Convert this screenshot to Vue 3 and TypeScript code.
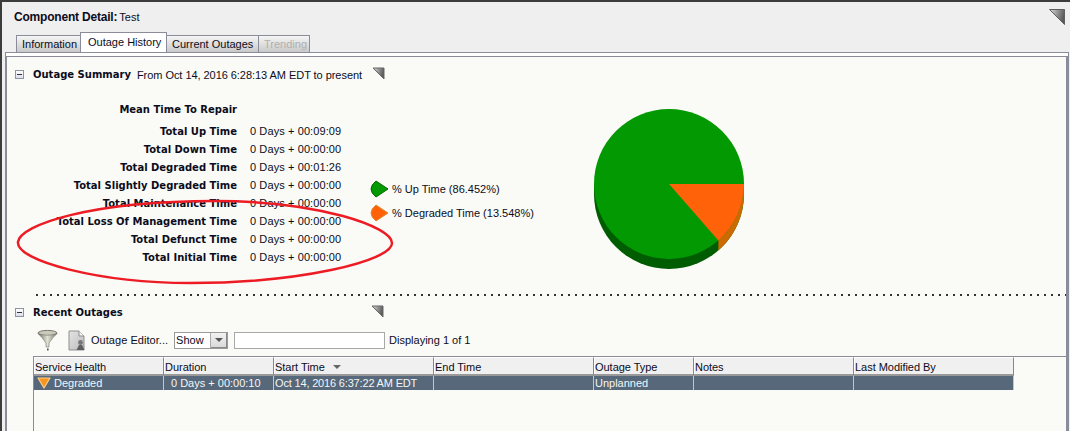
<script setup lang="ts">
const tabs = [
  { label: 'Information', cls: 'first' },
  { label: 'Outage History', cls: 'active' },
  { label: 'Current Outages', cls: '' },
  { label: 'Trending', cls: 'disabled' },
]
const stats = [
  ['Total Up Time', '0 Days + 00:09:09'],
  ['Total Down Time', '0 Days + 00:00:00'],
  ['Total Degraded Time', '0 Days + 00:01:26'],
  ['Total Slightly Degraded Time', '0 Days + 00:00:00'],
  ['Total Maintenance Time', '0 Days + 00:00:00'],
  ['Total Loss Of Management Time', '0 Days + 00:00:00'],
  ['Total Defunct Time', '0 Days + 00:00:00'],
  ['Total Initial Time', '0 Days + 00:00:00'],
]
const cols = ['Service Health', 'Duration', 'Start Time', 'End Time', 'Outage Type', 'Notes', 'Last Modified By']
</script>

<template>
  <div class="page">
    <div class="title-row">
      <span class="title-b">Component Detail:</span><span class="title-v">Test</span>
      <svg class="corner big" width="18" height="18" viewBox="0 0 18 18">
        <defs>
          <linearGradient id="tri" x1="0" y1="0" x2="1" y2="0.25">
            <stop offset="0" stop-color="#dcdcdc" />
            <stop offset="1" stop-color="#5a5a5a" />
          </linearGradient>
        </defs>
        <path d="M1.5 1.5H16.5V16.5Z" fill="url(#tri)" stroke="#5f5f5f" stroke-linejoin="round" />
      </svg>
    </div>
    <div class="tabs">
      <div v-for="t in tabs" :key="t.label" class="tab" :class="t.cls">{{ t.label }}</div>
    </div>
    <div class="panel-outer">
      <div class="panel">
        <div class="sec-head">
          <span class="minus"></span>
          <span class="sec-title">Outage Summary</span>
          <span class="sec-sub">From Oct 14, 2016 6:28:13 AM EDT to present</span>
          <svg class="corner" width="13" height="13" viewBox="0 0 13 13">
            <path d="M1 1H12V12Z" fill="url(#tri)" stroke="#666" stroke-linejoin="round" />
          </svg>
        </div>

        <div class="summary">
          <div class="stats">
            <div class="mttr">Mean Time To Repair</div>
            <div v-for="s in stats" :key="s[0]" class="stat">
              <span class="stat-l">{{ s[0] }}</span>
              <span class="stat-v">{{ s[1] }}</span>
            </div>
          </div>
          <div class="legend">
            <div class="leg">
              <svg width="19" height="18" viewBox="0 0 19 18"><path d="M6 1 L18 9 L6 17 Q1 13 1 9 Q1 5 6 1Z" fill="#029902" stroke="#016601" /></svg>
              <span>% Up Time (86.452%)</span>
            </div>
            <div class="leg">
              <svg width="19" height="18" viewBox="0 0 19 18"><path d="M6 1 L18 9 L6 17 Q1 13 1 9 Q1 5 6 1Z" fill="#ff6208" stroke="#e08a30" /></svg>
              <span>% Degraded Time (13.548%)</span>
            </div>
          </div>
          <svg class="pie" width="152" height="162" viewBox="0 0 152 162">
            <path d="M1 75V85A75 75 0 0 0 151 85V75Z" fill="#005c00" />
            <path d="M125.4 131.4 L125.4 141.4 A75 75 0 0 0 151 85 V75 Z" fill="#cc6a00" />
            <circle cx="76" cy="75" r="75" fill="#029902" />
            <path d="M76 75 H151 A75 75 0 0 1 125.4 131.4 Z" fill="#ff6208" />
          </svg>
        </div>

        <div class="dots"></div>

        <div class="sec-head second">
          <span class="minus"></span>
          <span class="sec-title">Recent Outages</span>
          <svg class="corner c2" width="13" height="13" viewBox="0 0 13 13">
            <path d="M1 1H12V12Z" fill="url(#tri)" stroke="#666" stroke-linejoin="round" />
          </svg>
        </div>

        <div class="toolbar">
          <svg class="funnel" width="21" height="22" viewBox="0 0 21 22">
            <defs>
              <linearGradient id="fun" x1="0" y1="0" x2="1" y2="0">
                <stop offset="0" stop-color="#6f6f5f" />
                <stop offset="0.5" stop-color="#e2e2d8" />
                <stop offset="1" stop-color="#77776a" />
              </linearGradient>
            </defs>
            <ellipse cx="10.5" cy="4" rx="9.5" ry="2.6" fill="#c9c9bc" stroke="#77776a" />
            <path d="M1 4.5 Q5 8 9 14 V18 H12 V14 Q16 8 20 4.5 Q10.5 8 1 4.5Z" fill="url(#fun)" stroke="#77776a" stroke-width="0.6" />
            <rect x="10" y="19.5" width="1.6" height="2" fill="#555" />
          </svg>
          <svg class="doc" width="18" height="21" viewBox="0 0 18 21">
            <defs>
              <linearGradient id="pg" x1="0" y1="0" x2="1" y2="1">
                <stop offset="0" stop-color="#e4e4e4" />
                <stop offset="1" stop-color="#bbbbbb" />
              </linearGradient>
            </defs>
            <path d="M1 1H11L16 6V20H1Z" fill="url(#pg)" stroke="#8f8f8f" />
            <path d="M11 1V6H16" fill="#f4f4f4" stroke="#8f8f8f" />
            <circle cx="12.5" cy="12.5" r="2.4" fill="#777" />
            <path d="M8.5 20 L11 15 H14 L16.5 20Z" fill="#5f5f5f" />
          </svg>
          <span class="tool-label">Outage Editor...</span>
          <div class="select">
            <span class="select-t">Show</span>
            <span class="select-b"><i></i></span>
          </div>
          <div class="input"></div>
          <span class="count">Displaying 1 of 1</span>
        </div>

        <div class="table">
          <div class="grid head">
            <div v-for="c in cols" :key="c" class="th">
              {{ c }}<i v-if="c === 'Start Time'" class="sort"></i>
            </div>
          </div>
          <div class="grid row">
            <div class="td first">
              <svg width="14" height="12" viewBox="0 0 14 12"><path d="M1 1H13L7 11Z" fill="#f7941d" stroke="#fbd08a" stroke-width="1.2" stroke-linejoin="round" /></svg>
              <span>Degraded</span>
            </div>
            <div class="td dur">0 Days + 00:00:10</div>
            <div class="td date">Oct 14, 2016 6:37:22 AM EDT</div>
            <div class="td"></div>
            <div class="td">Unplanned</div>
            <div class="td"></div>
            <div class="td"></div>
          </div>
        </div>
      </div>
    </div>

    <svg class="annot" width="400" height="90" viewBox="0 0 400 90">
      <path d="M18 43 C 20 26 90 2 215 2 C 320 2 392 28 392 44 C 392 62 300 84 190 84 C 100 84 16 62 18 43Z" fill="none" stroke="#ed1c24" stroke-width="2.5" />
    </svg>
  </div>
</template>

<style>
html, body { margin: 0; background: #efefef; }
</style>

<style scoped>
.page {
  position: relative;
  width: 1070px;
  height: 431px;
  overflow: hidden;
  box-sizing: border-box;
  border-top: 2px solid #3c3c3c;
  border-left: 2px solid #3c3c3c;
  background: #efefef;
  font-family: "Liberation Sans", Arial, sans-serif;
  font-size: 11px;
  color: #0c0c1c;
}
.title-row {
  position: relative;
  height: 30px;
  display: flex;
  align-items: center;
  padding-left: 12px;
  box-sizing: border-box;
}
.title-b { font-weight: bold; font-size: 12px; letter-spacing: -0.2px; margin-right: 2px; }
.title-v { font-size: 11px; }
.corner.big { position: absolute; right: 4px; top: 6px; }
.tabs { display: flex; align-items: flex-end; height: 20px; padding-left: 14px; }
.tab {
  box-sizing: border-box;
  height: 17px;
  padding: 0 5px;
  line-height: 17px;
  background: linear-gradient(#f5f5f5, #c9c9c9);
  border: 1px solid #8a8d99;
  border-bottom: none;
  border-left: none;
  white-space: nowrap;
  font-size: 11px;
}
.tab.first { border-left: 1px solid #8a8d99; width: 65px; }
.tab.active { width: 87px; height: 20px; background: #fff; line-height: 18px; padding-left: 7px; border-left: 1px solid #8a8d99; margin-left: -1px; }
.tab:nth-child(3) { width: 92px; }
.tab.disabled { width: 51px; color: #b0b0b0; }
.panel-outer {
  width: 1064px;
  box-sizing: border-box;
  margin-left: 3px;
  border: 1px solid #8a8d99;
  border-bottom: none;
  background: #fff;
  padding: 3px 0 0 0;
  height: 379px;
}
.panel {
  height: 100%;
  box-sizing: border-box;
  border-top: 1px solid #8a8d99;
  border-left: 1px solid #8a8d99;
  border-right: 2px solid #8a8d99;
  background: #fafbf6;
  display: flex;
  flex-direction: column;
}
.sec-head {
  display: flex;
  align-items: center;
  height: 13px;
  margin-top: 11px;
  padding-left: 8px;
  position: relative;
}
.minus {
  width: 7px;
  height: 7px;
  border: 1px solid #8c94a4;
  background: linear-gradient(#fff, #dde);
  position: relative;
  flex: none;
  margin-right: 9px;
}
.minus::after { content: ""; position: absolute; left: 1px; right: 1px; top: 3px; height: 1px; background: #333; }
.sec-title { font-weight: bold; font-family: "DejaVu Sans", sans-serif; font-size: 10px; }
.sec-sub { margin-left: 6px; letter-spacing: -0.05px; }
.sec-head > .corner { margin-left: 10px; margin-top: -2px; }
.corner.c2 { position: absolute; left: 364px; top: -1px; margin: 0; }
.summary { display: flex; height: 213px; }
.stats { width: 363px; padding-top: 20px; box-sizing: border-box; flex: none; }
.mttr { font-weight: bold; font-family: "DejaVu Sans", sans-serif; font-size: 10px; text-align: right; width: 230px; height: 18px; line-height: 18px; margin-bottom: 4px; }
.stat { display: flex; height: 18px; line-height: 18px; }
.stat-l { width: 230px; text-align: right; font-weight: bold; font-family: "DejaVu Sans", sans-serif; font-size: 10px; white-space: nowrap; }
.stat-v { margin-left: 13px; white-space: nowrap; line-height: 16px; letter-spacing: 0.1px; }
.legend { width: 196px; padding-top: 99px; box-sizing: border-box; flex: none; }
.leg { display: flex; align-items: center; gap: 3px; height: 18px; margin-bottom: 6px; white-space: nowrap; }
.pie { flex: none; margin-top: 28px; margin-left: 27px; }
.dots {
  height: 2px;
  margin-left: 29px;
  background: repeating-linear-gradient(90deg, #333 0 2px, transparent 2px 7px);
}
.sec-head.second { margin-top: 10px; }
.toolbar { display: flex; align-items: center; height: 22px; margin-top: 10px; padding-left: 30px; }
.doc { margin-left: 10px; }
.tool-label { margin-left: 5px; letter-spacing: 0.04px; }
.select {
  margin-left: 6px;
  width: 54px;
  height: 17px;
  box-sizing: border-box;
  border: 1px solid #9a9a9a;
  background: #fff;
  display: flex;
  justify-content: space-between;
  line-height: 15px;
}
.select-t { padding-left: 1px; }
.select-b {
  width: 16px;
  background: linear-gradient(#f2f2f2, #d8d8d8);
  border-left: 1px solid #aaa;
  box-shadow: inset -1px -1px 0 #888;
  display: flex;
  align-items: center;
  justify-content: center;
}
.select-b i { border: 4px solid transparent; border-top: 4px solid #555; border-bottom: none; }
.input { margin-left: 6px; width: 151px; height: 17px; box-sizing: border-box; border: 1px solid #a8a8a8; background: #fff; }
.count { margin-left: 4px; }
.table { flex: 1; margin-left: 26px; margin-top: 5px; border-top: 1px solid #8a8d99; border-left: 1px solid #8a8d99; }
.grid { display: grid; grid-template-columns: 130px 110px 160px 160px 100px 160px 160px; width: 980px; }
.th {
  box-sizing: border-box;
  height: 19px;
  line-height: 18px;
  padding-left: 1px;
  background: #f0f0f0;
  border-right: 1px solid #888;
  border-bottom: 2px solid #999;
  border-top: 1px solid #fff;
  box-shadow: inset 1px 0 0 #fff;
  white-space: nowrap;
  letter-spacing: -0.03px;
}
.sort { display: inline-block; margin-left: 8px; vertical-align: 2px; border: 4.5px solid transparent; border-top: 4px solid #666; border-bottom: none; }
.row { background: #566879; height: 14px; color: #f4f6f8; }
.td { box-sizing: border-box; height: 14px; line-height: 14px; padding-left: 1px; border-right: 1px solid #c4c8cc; white-space: nowrap; overflow: hidden; }
.td.first { display: flex; align-items: center; gap: 3px; padding-left: 3px; }
.td.dur { padding-left: 7px; }
.td.date { letter-spacing: -0.17px; }
.annot { position: absolute; left: -2px; top: 197px; pointer-events: none; }
</style>
